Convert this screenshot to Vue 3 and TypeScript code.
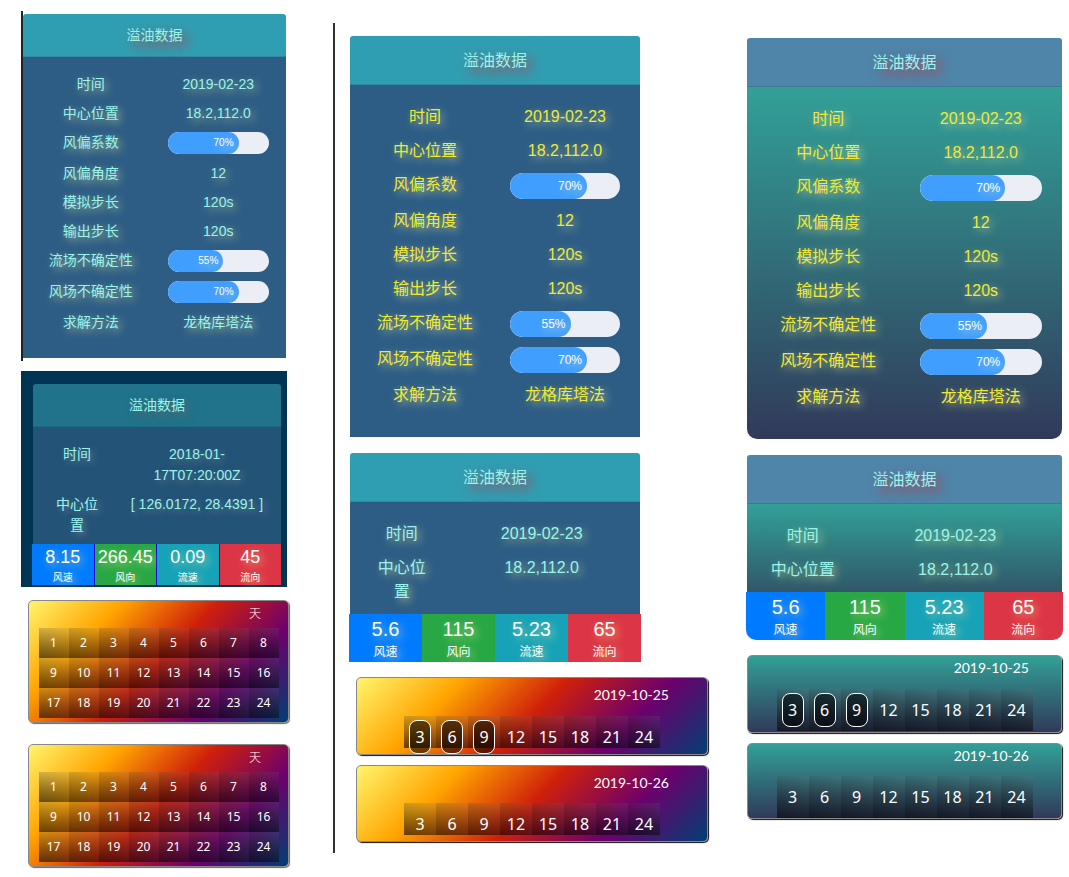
<script setup lang="ts">
import { reactive } from 'vue'

interface Row {
  label: string
  value?: string
  percent?: number
}

interface Stat {
  label: string
  value: string
  tone: 'blue' | 'green' | 'teal' | 'red'
}

interface Calendar {
  title: string
  hours: number[]
  active: number[]
}

const title = '溢油数据'

const detailRows: Row[] = [
  { label: '时间', value: '2019-02-23' },
  { label: '中心位置', value: '18.2,112.0' },
  { label: '风偏系数', percent: 70 },
  { label: '风偏角度', value: '12' },
  { label: '模拟步长', value: '120s' },
  { label: '输出步长', value: '120s' },
  { label: '流场不确定性', percent: 55 },
  { label: '风场不确定性', percent: 70 },
  { label: '求解方法', value: '龙格库塔法' },
]

const tones: Stat['tone'][] = ['blue', 'green', 'teal', 'red']
const statLabels = ['风速', '风向', '流速', '流向']
const makeStats = (values: string[]): Stat[] =>
  values.map((value, i) => ({ value, label: statLabels[i], tone: tones[i] }))

const dayHours = Array.from({ length: 24 }, (_, i) => i + 1)
const stepHours = Array.from({ length: 8 }, (_, i) => (i + 1) * 3)

const makeSteps = (): Calendar[] => [
  { title: '2019-10-25', hours: stepHours, active: [3, 6, 9] },
  { title: '2019-10-26', hours: stepHours, active: [] },
]

const columns = reactive([
  {
    id: 'compact',
    summary: [
      { label: '时间', value: '2018-01-17T07:20:00Z' },
      { label: '中心位置', value: '[ 126.0172, 28.4391 ]' },
    ] as Row[],
    stats: makeStats(['8.15', '266.45', '0.09', '45']),
    calendars: [
      { title: '天', hours: dayHours, active: [] },
      { title: '天', hours: dayHours, active: [] },
    ] as Calendar[],
  },
  {
    id: 'sunset',
    summary: detailRows.slice(0, 2),
    stats: makeStats(['5.6', '115', '5.23', '65']),
    calendars: makeSteps(),
  },
  {
    id: 'ocean',
    summary: detailRows.slice(0, 2),
    stats: makeStats(['5.6', '115', '5.23', '65']),
    calendars: makeSteps(),
  },
])

function toggle(calendar: Calendar, hour: number) {
  const at = calendar.active.indexOf(hour)
  if (at >= 0) calendar.active.splice(at, 1)
  else calendar.active.push(hour)
}
</script>

<template>
  <main class="page">
    <template v-for="(col, index) in columns" :key="col.id">
      <div v-if="index === 1" class="divider"></div>
      <div class="column" :class="col.id">
        <div class="frame frame-detail">
          <section class="card detail">
            <h2 class="card-head">{{ title }}</h2>
            <div class="card-body">
              <table class="rows">
                <tbody>
                  <tr v-for="row in detailRows" :key="row.label">
                    <th scope="row">{{ row.label }}</th>
                    <td v-if="row.percent === undefined">{{ row.value }}</td>
                    <td v-else class="bar-cell">
                      <div
                        class="bar"
                        role="progressbar"
                        :aria-label="row.label"
                        :aria-valuenow="row.percent"
                        aria-valuemin="0"
                        aria-valuemax="100"
                      >
                        <div class="bar-fill" :style="{ width: row.percent + '%' }">{{ row.percent }}%</div>
                      </div>
                    </td>
                  </tr>
                </tbody>
              </table>
            </div>
          </section>
        </div>

        <div class="frame frame-summary">
          <section class="card summary">
            <h2 class="card-head">{{ title }}</h2>
            <div class="card-body">
              <table class="rows">
                <tbody>
                  <tr v-for="row in col.summary" :key="row.label">
                    <th scope="row">{{ row.label }}</th>
                    <td>{{ row.value }}</td>
                  </tr>
                </tbody>
              </table>
            </div>
            <div class="stats">
              <div v-for="stat in col.stats" :key="stat.label" class="stat" :class="stat.tone">
                <div class="stat-value">{{ stat.value }}</div>
                <div class="stat-label">{{ stat.label }}</div>
              </div>
            </div>
          </section>
        </div>

        <section
          v-for="(cal, n) in col.calendars"
          :key="n"
          class="calendar"
          :class="{ selected: cal.active.length > 0 }"
        >
          <h3 class="calendar-head">{{ cal.title }}</h3>
          <div class="hours">
            <button
              v-for="hour in cal.hours"
              :key="hour"
              type="button"
              class="hour"
              :class="{ on: cal.active.includes(hour) }"
              :aria-pressed="cal.active.includes(hour)"
              @click="toggle(cal, hour)"
            >
              <span class="hour-text">{{ hour }}</span>
            </button>
          </div>
        </section>
      </div>
    </template>
  </main>
</template>

<style>
body {
  background: #fff;
}
</style>

<style scoped>
.page {
  --aqua: #98f5ec;
  --yellow: #f0e936;
  display: flex;
  box-sizing: border-box;
  min-height: 100vh;
  padding: 0 7px 0 21px;
  font-family: "Liberation Sans", "Noto Sans CJK SC", sans-serif;
  font-size: 16px;
  line-height: 24px;
}

.divider {
  flex: none;
  width: 2px;
  margin: 23px 15px 24px 43px;
  background: #303030;
}

.column {
  display: flex;
  flex-direction: column;
  min-width: 0;
}

.compact {
  flex: 269 1 0;
  padding: 11px 0 10px;
  font-size: 14px;
  line-height: 21px;
}

.sunset {
  flex: 358 1 0;
  padding: 36px 0 24px;
}

.ocean {
  flex: 315 1 0;
  margin-left: 39px;
  padding: 38px 0 24px;
}

/* frames around the cards */
.frame-detail {
  margin-bottom: 16px;
}

.frame-summary {
  margin-bottom: 15px;
}

.sunset .frame {
  margin-right: 68px;
}

.compact .frame-detail {
  margin: 0 4px 10px 0;
  padding: 3px 0;
  border-left: 2px solid #222;
}

.compact .frame-summary {
  margin: 0 3px 13px 0;
  padding: 13px 6px 2px 12px;
  background: #003453;
}

/* cards */
.card {
  color: var(--aqua);
  text-align: center;
  text-shadow: 3px 3px 8px rgba(255, 255, 160, 0.6);
}

.sunset .detail .rows,
.ocean .detail .rows {
  color: var(--yellow);
}

.card-head {
  margin: 0;
  padding: 13px 0 11px;
  border-bottom: 1px solid #2e8ba3;
  border-radius: 3px 3px 0 0;
  background: #309eb2;
  font-size: inherit;
  font-weight: 400;
  text-shadow: 5px 5px 12px rgba(215, 40, 50, 0.8);
}

.compact .card-head {
  padding: 11px 0 10px;
}

.compact .summary .card-head {
  border-color: #1c6b84;
  background: #20738a;
  text-shadow: 4px 4px 8px rgba(160, 90, 90, 0.5);
}

.ocean .card-head {
  border-color: #41759a;
  background: #4e85a9;
}

.card-body {
  padding: 15px 5px 25px;
  background: #2d5d85;
}

.summary .card-body {
  padding-bottom: 5px;
}

.compact .card-body {
  padding: 13px 4px 21px;
}

.compact .summary .card-body {
  padding-bottom: 4px;
  background: #245378;
}

.ocean .detail .card-body {
  border-radius: 0 0 10px 10px;
  background: linear-gradient(#32a097, #303a5a);
}

.ocean .summary .card-body {
  background: linear-gradient(#32a097, #305769);
}

.rows {
  width: 100%;
  border-collapse: collapse;
  table-layout: fixed;
}

.rows th,
.rows td {
  box-sizing: border-box;
  width: 50%;
  padding: 5px 15px;
  font-weight: 400;
  text-align: center;
  vertical-align: top;
}

.compact .rows th,
.compact .rows td {
  padding: 4px 13px;
}

.compact .summary .rows {
  text-shadow: 3px 3px 6px rgba(200, 200, 160, 0.4);
}

.summary .rows th {
  width: 33.333%;
}

.summary .rows td {
  width: 66.667%;
}

.compact .rows .bar-cell {
  padding-bottom: 5px;
}

/* progress bars */
.bar {
  overflow: hidden;
  border-radius: 13px;
  background: #ebeef5;
}

.bar-fill {
  box-sizing: border-box;
  padding-right: 5px;
  border-radius: 13px;
  background: #409eff;
  color: #fff;
  font-size: 12px;
  line-height: 26px;
  text-align: right;
}

.compact .bar-fill {
  font-size: 10px;
  line-height: 22px;
}

/* coloured figures under the summary */
.stats {
  display: grid;
  grid-template-columns: repeat(4, 1fr);
  margin: 0 -1px;
}

.compact .stats {
  gap: 1px;
  margin-right: 0;
  background: #1408e0;
}

.ocean .stats {
  overflow: hidden;
  border-radius: 0 0 10px 10px;
}

.stat {
  padding: 1px 0;
  color: #fff;
}

.compact .stat {
  padding: 0;
}

.stat-value {
  font-size: 20px;
  line-height: 28px;
}

.stat-label {
  font-size: 12px;
  line-height: 18px;
}

.compact .stat-value {
  font-size: 18px;
  line-height: 26px;
}

.compact .stat-label {
  font-size: 10px;
  line-height: 15px;
}

.blue {
  background: #007bff;
}

.green {
  background: #28a745;
}

.teal {
  background: #17a2b8;
}

.red {
  background: #dc3545;
}

/* hour pickers */
.calendar {
  margin: 0 0 10px 6px;
  padding-bottom: 6px;
  border: 1px solid #888;
  border-radius: 5px;
  background: linear-gradient(135deg, #fff570, #ffa500 25%, #cf200a 50%, #6c006c 75%, #003f74);
  box-shadow: 1px 1px 1px #111;
  color: #fff;
}

.compact .calendar {
  margin: 0 1px 21px 7px;
  padding-bottom: 4px;
  box-shadow: 1px 1px 1px #666;
}

.compact .calendar:last-child {
  margin-bottom: 0;
}

.ocean .calendar {
  margin-left: 0;
  padding-bottom: 0;
  background: linear-gradient(#32a097, #303a5a);
}

.ocean .calendar.selected {
  padding-bottom: 1px;
}

.calendar-head {
  height: 37px;
  margin: 0;
  padding-right: 38px;
  font-family: Lato, sans-serif;
  font-size: 14px;
  font-weight: 400;
  line-height: 33px;
  text-align: right;
}

.selected .calendar-head {
  height: 38px;
}

.ocean .calendar-head {
  height: 32px;
  padding-right: 32px;
  line-height: 23px;
}

.ocean .selected .calendar-head {
  height: 33px;
}

.compact .calendar-head {
  height: 27px;
  padding-right: 27px;
  font-family: "Noto Sans CJK SC", sans-serif;
  font-size: 12px;
  font-weight: 300;
  line-height: 23px;
}

.hours {
  display: grid;
  grid-template-columns: repeat(8, 32px);
  justify-content: center;
}

.compact .hours {
  grid-template-columns: repeat(8, 30px);
}

.hour {
  display: flex;
  align-items: flex-start;
  justify-content: center;
  height: 32px;
  padding: 4px 0 0;
  border: 0;
  background: linear-gradient(195deg, rgba(128, 128, 128, 0.15), rgba(0, 0, 0, 0.6));
  color: inherit;
  font-family: "Noto Sans", sans-serif;
  font-size: 16px;
  cursor: pointer;
}

.ocean .hour {
  height: 42px;
}

.compact .hour {
  height: 30px;
  padding: 0;
  font-size: 12px;
}

.hour-text {
  display: flex;
  box-sizing: border-box;
  justify-content: center;
  width: 22px;
  height: 34px;
  border: 1px solid transparent;
  border-radius: 8px;
  line-height: 32px;
}

.compact .hour-text {
  height: 30px;
  line-height: 28px;
}

.on .hour-text {
  border-color: #fff;
  background: rgba(0, 0, 0, 0.55);
}
</style>
